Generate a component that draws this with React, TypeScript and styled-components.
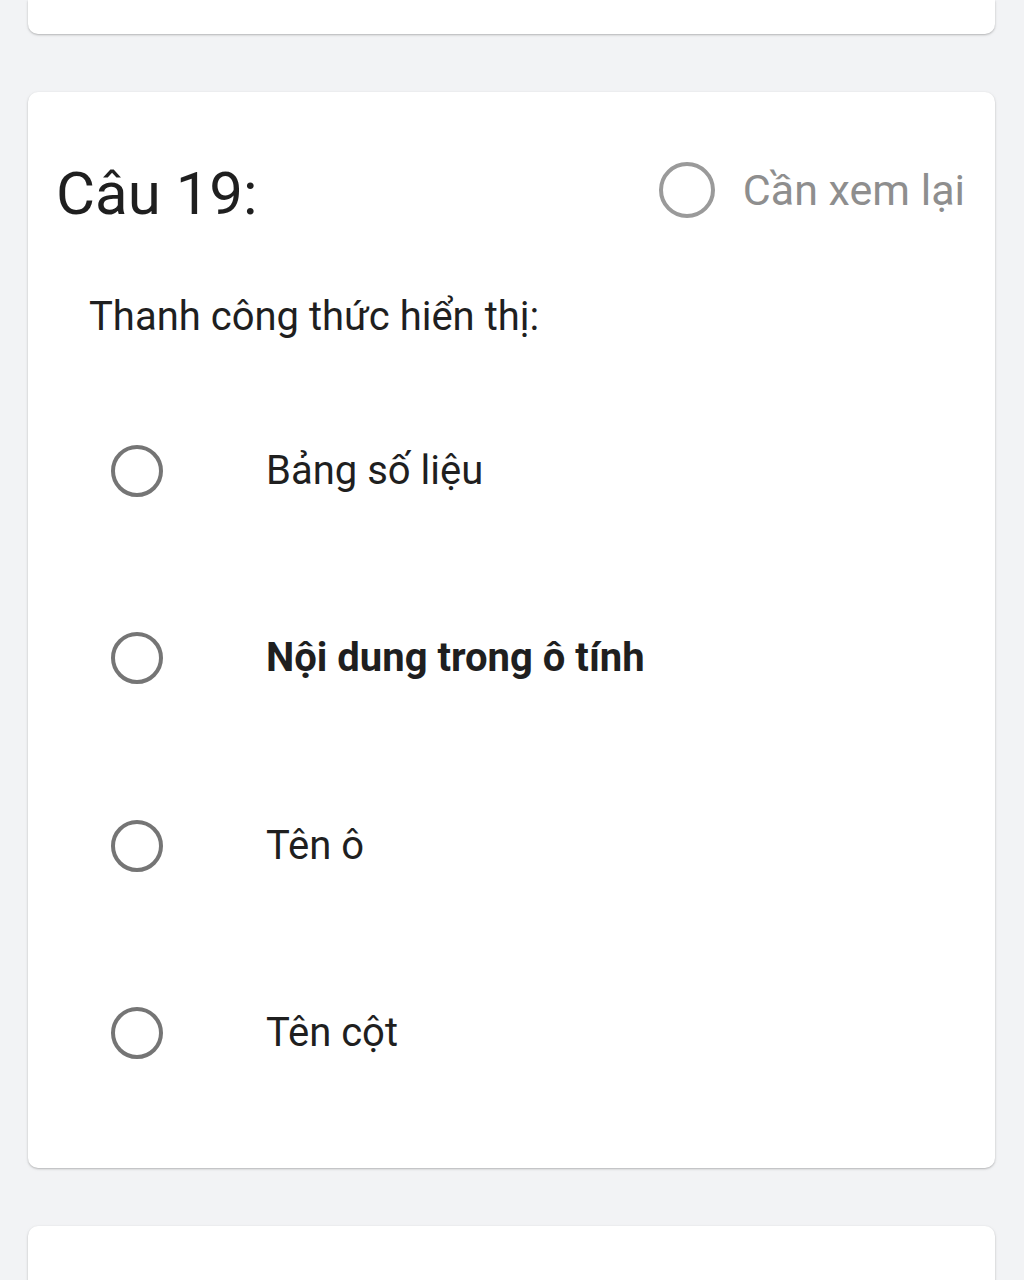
import React from "react";
import styled, { createGlobalStyle } from "styled-components";

const GlobalStyle = createGlobalStyle`
  html, body {
    margin: 0;
    padding: 0;
    background: #f2f3f5;
    font-family: Roboto, "Noto Sans", Arial, sans-serif;
  }
`;

const Page = styled.div`
  display: flex;
  flex-direction: column;
  gap: 58px;
  padding: 0 29px 0 28px;
  height: 1280px;
  overflow: hidden;
`;

const Card = styled.div<{ $partial?: "top" | "bottom" }>`
  background: #ffffff;
  border-radius: ${(p) =>
    p.$partial === "top" ? "0 0 10px 10px" : "10px"};
  box-shadow: 0 1px 2px rgba(0, 0, 0, 0.22), 0 1px 4px rgba(0, 0, 0, 0.06);
  flex-shrink: 0;
`;

const StubCard = styled(Card)`
  height: 34px;
`;

const QuestionCard = styled(Card)`
  height: 1076px;
  box-sizing: border-box;
  padding: 60px 30px 0 26px;
  display: flex;
  flex-direction: column;
`;

const BottomCard = styled(Card)`
  height: 120px;
`;

const HeaderRow = styled.div`
  display: flex;
  align-items: center;
  justify-content: space-between;
  height: 76px;
`;

const Title = styled.h2`
  margin: 0 0 0 2px;
  font-size: 60px;
  font-weight: 400;
  color: #1f1f1f;
  line-height: 1;
  position: relative;
  top: 4px;
`;

const ReviewToggle = styled.label`
  display: flex;
  align-items: center;
  gap: 28px;
  color: #8e8e8e;
  font-size: 43px;
  line-height: 1;
`;

const Radio = styled.span<{ $size: number; $color: string }>`
  display: inline-block;
  box-sizing: border-box;
  width: ${(p) => p.$size}px;
  height: ${(p) => p.$size}px;
  border-radius: 50%;
  border: 4px solid ${(p) => p.$color};
  flex-shrink: 0;
`;

const QuestionText = styled.p`
  margin: 65px 0 0 35px;
  font-size: 40px;
  line-height: 48px;
  color: #1f1f1f;
`;

const Options = styled.div`
  display: flex;
  flex-direction: column;
  margin-top: 36px;
`;

const OptionRow = styled.div`
  display: flex;
  align-items: center;
  height: 187.5px;
  padding-left: 57px;
  gap: 103px;
`;

const OptionLabel = styled.span<{ $bold?: boolean }>`
  font-size: 40px;
  line-height: 48px;
  color: #1f1f1f;
  font-weight: ${(p) => (p.$bold ? 700 : 400)};
`;

const options = [
  { text: "Bảng số liệu" },
  { text: "Nội dung trong ô tính", bold: true },
  { text: "Tên ô" },
  { text: "Tên cột" },
];

export default function App() {
  return (
    <>
      <GlobalStyle />
      <Page>
        <StubCard $partial="top" />
        <QuestionCard>
          <HeaderRow>
            <Title>Câu 19:</Title>
            <ReviewToggle>
              <Radio $size={56} $color="#9a9a9a" />
              Cần xem lại
            </ReviewToggle>
          </HeaderRow>
          <QuestionText>Thanh công thức hiển thị:</QuestionText>
          <Options>
            {options.map((o) => (
              <OptionRow key={o.text}>
                <Radio $size={52} $color="#757575" />
                <OptionLabel $bold={o.bold}>{o.text}</OptionLabel>
              </OptionRow>
            ))}
          </Options>
        </QuestionCard>
        <BottomCard />
      </Page>
    </>
  );
}
